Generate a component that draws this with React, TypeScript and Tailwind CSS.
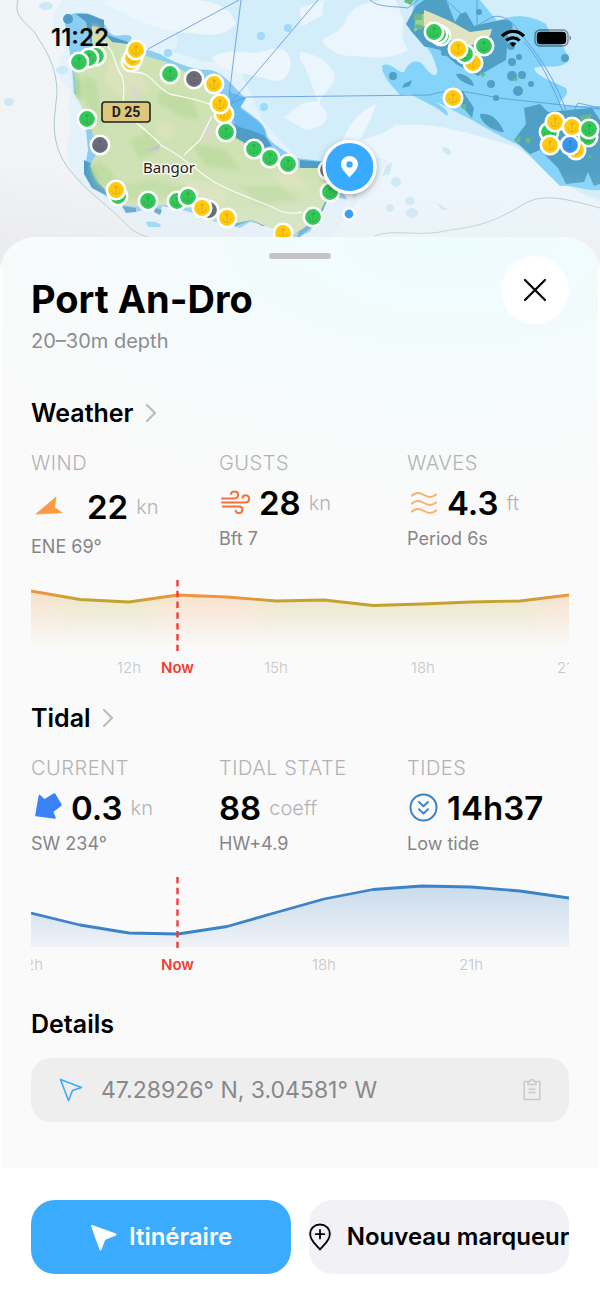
import type { ReactNode } from "react";

const FONT = "font-['Inter','Liberation_Sans',sans-serif]";

/* ── Map data ── */

type MarkerKind = "green" | "yellow" | "grey" | "blue";

const MARKER_FILL: Record<MarkerKind, string> = {
  green: "#34c759",
  yellow: "#ffc90e",
  grey: "#6c6d7c",
  blue: "#3a97f0",
};

const MARKERS: [number, number, MarkerKind][] = [
  [96, 56, "green"],
  [89, 58, "green"],
  [79, 62, "green"],
  [131, 62, "yellow"],
  [133, 58, "yellow"],
  [136, 50, "yellow"],
  [170, 74, "green"],
  [194, 79, "grey"],
  [214, 84, "yellow"],
  [224, 114, "yellow"],
  [220, 104, "yellow"],
  [226, 132, "green"],
  [254, 149, "green"],
  [270, 158, "green"],
  [288, 164, "green"],
  [87, 119, "green"],
  [100, 145, "grey"],
  [118, 196, "green"],
  [116, 190, "yellow"],
  [148, 201, "green"],
  [177, 201, "green"],
  [188, 197, "green"],
  [209, 210, "grey"],
  [202, 208, "yellow"],
  [227, 218, "yellow"],
  [283, 233, "yellow"],
  [313, 217, "green"],
  [330, 192, "green"],
  [328, 170, "grey"],
  [441, 36, "green"],
  [438, 34, "green"],
  [434, 32, "green"],
  [473, 63, "yellow"],
  [465, 54, "green"],
  [458, 49, "yellow"],
  [484, 46, "green"],
  [453, 98, "yellow"],
  [549, 132, "green"],
  [588, 137, "green"],
  [576, 150, "yellow"],
  [550, 145, "yellow"],
  [555, 122, "yellow"],
  [572, 127, "yellow"],
  [589, 129, "green"],
  [570, 145, "blue"],
];

function Marker({ x, y, kind }: { x: number; y: number; kind: MarkerKind }) {
  return (
    <g transform={`translate(${x} ${y})`}>
      <circle r="9.2" fill={MARKER_FILL[kind]} stroke="#fff" strokeWidth="2.6" />
      <g fill="none" stroke="#000" strokeOpacity="0.11" strokeWidth="1" strokeLinecap="round">
        <circle cy="-3.4" r="1.1" />
        <path d="M0 -2.2V4.6M-4 .6C-4 3.4 -2.4 4.6 0 4.6S4 3.4 4 .6" />
      </g>
    </g>
  );
}

function SeaMap() {
  return (
    <svg
      className="block h-full w-full"
      viewBox="0 0 600 273"
      preserveAspectRatio="xMidYMin slice"
      role="img"
      aria-label="Map"
    >
      <defs>
        <linearGradient id="sea" x1="0" y1="1" x2="0.4" y2="0">
          <stop offset="0" stopColor="#e9eaec" />
          <stop offset="0.35" stopColor="#f2f3f4" />
          <stop offset="1" stopColor="#f0f6fa" />
        </linearGradient>
        <linearGradient id="fog" x1="0" y1="0" x2="0" y2="1">
          <stop offset="0.62" stopColor="#ececee" stopOpacity="0" />
          <stop offset="0.9" stopColor="#ececee" stopOpacity="0.95" />
        </linearGradient>
        <filter id="pinShadow" x="-40%" y="-40%" width="180%" height="180%">
          <feDropShadow dx="0" dy="2" stdDeviation="3" floodColor="#000" floodOpacity="0.3" />
        </filter>
        <filter id="soft">
          <feGaussianBlur stdDeviation="2" />
        </filter>
      </defs>

      <rect width="600" height="273" fill="url(#sea)" />

      {/* Pale sea */}
      <path
        fill="#e4f2fb"
        d="M62 0H600V240H150C136 222 118 212 98 200C76 184 64 166 68 140C76 120 62 106 72 92C54 78 56 60 66 50C52 34 46 20 62 0Z"
      />
      <path
        fill="#d3edfa"
        d="M182 0H600V200L520 170L430 128L395 124L382 135L350 150L330 170L300 162L262 120L236 60L205 62L170 50C190 44 160 24 182 0Z"
      />
      <path
        fill="#edf6fd"
        d="M100 2C120 10 150 30 180 32C205 34 220 40 236 24C232 8 214 0 190 0H108ZM212 58C232 44 250 58 268 50C300 40 296 88 270 80C250 72 226 76 212 58Z"
      />
      <path
        fill="#ebf5fd"
        d="M300 8L324 0L322 16C312 20 306 26 300 26ZM346 20C352 4 372 0 396 0L402 16C408 26 396 32 408 50C392 60 372 58 358 56C342 58 326 50 322 40C330 34 342 32 346 20ZM300 52C318 54 330 62 335 76C334 90 320 92 320 104C336 120 322 128 306 130L284 118C294 108 304 100 318 102C310 80 306 66 300 60Z"
      />
      <path
        fill="#edf6fd"
        d="M340 150C346 124 362 110 376 104C372 116 368 126 360 140C370 138 388 132 396 126C430 120 470 134 514 146C542 162 560 184 600 204V240H330C340 218 372 190 388 160Z"
      />

      {/* Shallow water */}
      <path
        fill="#84d3f8"
        d="M414 0H480L498 22C508 14 530 14 546 24C550 38 568 44 568 62C556 70 546 64 534 68C536 76 550 80 566 88C570 98 560 96 560 106H600V190C588 192 572 184 560 186C550 176 536 162 520 146C500 136 486 128 472 120C456 112 446 106 436 102C444 108 450 112 447 116C436 106 424 102 414 96C408 92 404 96 400 95C392 86 382 76 382 66C390 60 398 74 404 72C410 58 420 60 424 66C434 80 440 76 436 66C432 50 424 44 410 30Z"
      />
      <path
        fill="#8ccdf2"
        d="M64 18C76 8 100 12 108 30C114 42 128 30 132 38C124 46 140 46 160 54C180 66 196 70 210 70C226 74 230 84 246 98L240 106C252 116 264 122 266 132C268 142 280 148 296 158L330 162L360 190L350 200L330 196L310 232L290 240L280 228L250 222L240 228L216 222L190 212L162 206L160 214L150 208L136 212L120 204L92 188L84 172L88 150L84 110L74 92L72 66Z"
      />
      <path
        fill="#4f9dc6"
        d="M76 14L88 14L104 20L104 34L116 38L128 42L128 52L90 42L86 22ZM74 92L86 108L84 96ZM84 160L92 164L94 176L104 188L108 196L92 188L84 174ZM122 206L136 208V212L126 213ZM156 208L162 210L160 215L154 212ZM230 122L244 128L262 132L272 146L254 150L234 142ZM228 222L250 216L280 226L262 226L252 220L236 226ZM300 160L324 162L330 170L300 170ZM330 194L318 222L296 240L300 228Z"
      />
      <path fill="#62b9ef" d="M230 92L246 98L240 108C252 118 264 122 266 136L250 130L236 126L230 112Z" />
      <circle cx="68" cy="19" r="5" fill="#4f9dc6" />
      <path fill="#84d3f8" d="M146 222C152 220 164 224 160 227H148Z" />
      <path
        fill="#509fc4"
        d="M416 6L424 0H446L455 22L460 14L466 12L474 26L500 20C514 18 516 28 508 34L506 60L492 68L478 76L456 64L440 50L424 46L412 32L406 24ZM456 74C464 72 474 80 474 86C466 84 458 80 456 74ZM462 90L474 108L472 118L460 104ZM480 114C492 112 500 122 504 132C496 132 480 124 480 114ZM404 84L412 80L410 86L402 88ZM524 108L540 104L548 112L592 108L600 120V184L594 186L588 172L584 182L566 184L558 168L540 150L530 154L514 140L526 124Z"
      />
      {[
        [433, 5, 4],
        [445, 7, 4],
        [479, 12, 3],
        [393, 76, 4],
        [427, 43, 4],
        [444, 53, 3],
        [491, 84, 4],
        [512, 62, 4],
        [519, 57, 3],
        [512, 76, 5],
        [522, 75, 4],
        [531, 84, 3],
        [518, 91, 5],
        [496, 98, 3],
        [565, 58, 4],
        [511, 46, 4],
      ].map(([cx, cy, r]) => (
        <circle key={`${cx}-${cy}`} cx={cx} cy={cy} r={r} fill="#509fc4" />
      ))}
      <g fill="#9fdaf8">
        <circle cx="168" cy="53" r="4" />
        <circle cx="261" cy="36" r="4" />
        <circle cx="288" cy="28" r="4" />
        <circle cx="264" cy="107" r="4" />
      </g>
      <g fill="#cde9f7">
        <ellipse cx="9" cy="102" rx="5" ry="4" />
        <ellipse cx="46" cy="6" rx="7" ry="4" />
        <ellipse cx="62" cy="70" rx="6" ry="4" />
        <ellipse cx="396" cy="182" rx="5" ry="5" />
        <ellipse cx="410" cy="201" rx="5" ry="4" />
        <ellipse cx="390" cy="208" rx="4" ry="4" />
        <ellipse cx="412" cy="213" rx="6" ry="5" />
        <path d="M386 166L392 162L390 174L382 176ZM442 148C450 146 452 152 450 156L444 152ZM436 202L448 210L442 210Z" />
      </g>

      {/* Land */}
      <path
        fill="#cfe2b4"
        d="M92 26L100 28L112 42L128 44L146 56L166 62L186 72L206 84L220 96L230 114L236 138L250 146L270 154L300 168L326 168L334 190L326 200L318 216L304 228L290 236L270 228L252 220L232 224L208 214L190 206L166 205L140 207L122 205L108 192L98 182L90 166L98 150L93 135L85 112L76 96L74 66L82 54L92 46Z"
      />
      <g filter="url(#soft)">
        <path fill="#8ccb8e" d="M75 70L79 80L80 100L76 94ZM92 164L98 176L110 190L96 182L90 168Z" />
        <path
          fill="#c0dca3"
          d="M84 76L96 80L100 110L104 132L90 112L82 92ZM98 160L112 172L120 200L100 184L92 168ZM160 90L190 96L200 120L180 116L156 102ZM190 142L226 150L240 170L206 166ZM130 140L150 130L160 150L140 160ZM240 186L280 186L300 200L260 206ZM118 186L150 180L190 188L170 198L130 202Z"
        />
        <path
          fill="#dbe3bb"
          d="M110 60L140 70L150 90L120 96L104 80ZM180 176L230 190L220 204L190 194ZM160 120L176 128L170 140L156 134ZM270 170L300 174L310 190L282 186Z"
        />
        <path fill="#dccf9f" d="M92 24L100 28L104 40L96 36Z" />
        <path fill="#d9dac9" d="M206 118L214 126L210 142L200 136ZM130 84L142 88L138 100L130 98Z" />
      </g>
      <path fill="#c6c4cf" d="M146 151L162 143L158 150Z" />
      <path fill="#9fcf94" d="M416 14L424 14L430 26L420 28L414 32Z" />
      <path fill="#dfe3c0" d="M424 10L434 14L452 22L470 32L492 29L490 36L470 46L450 40L424 26Z" />
      <g fill="#68b98b">
        <path d="M405 0H414L411 5L404 2ZM414 14H422V20H414ZM416 24L424 26L422 30L414 28ZM460 104L466 104L466 109L462 109ZM480 72L486 74L482 78ZM512 78L518 78L516 82ZM516 138L521 136L520 142L515 142ZM526 138L531 138L529 144L525 142ZM580 116L592 114L590 120L582 122ZM588 154L592 157L590 159Z" />
      </g>

      {/* Roads */}
      <g fill="none" stroke="#fff" strokeOpacity="0.85" strokeWidth="1.3">
        <path d="M104 42C116 52 114 66 122 76C126 86 122 98 124 112C136 124 150 132 162 146C180 154 190 166 214 182C236 194 252 198 274 208C284 214 292 214 302 212" />
        <path d="M132 72C154 72 150 84 170 94C186 98 196 98 214 106M184 155L200 140L212 116" />
      </g>

      {/* Ferry routes and depth contours */}
      <g fill="none" stroke="#5b93dc" strokeWidth="0.8">
        <path d="M148 49L239 0M241 0L228 104M228 106L318 0M230 104L246 97L300 96.500L430 95C450 88 470 92 498 98L600 109M370 0C378 8 396 6 408 8L418 0M446 0L472 24M477 0V26L492 17C510 12 520 34 532 48C546 66 556 84 566 110M524 42C540 60 550 80 563 112M574 110L578 103L600 108" />
      </g>
      <g fill="none" stroke="#8fb9b9" strokeWidth="0.7">
        <path d="M18 0C12 20 32 24 38 38C50 56 56 70 57 90C56 112 50 130 60 154C72 182 110 206 128 226C136 234 144 236 152 238" />
        <path d="M374 236C394 228 420 238 450 230C486 226 504 216 524 204C544 192 570 200 600 208" />
      </g>

      <rect width="600" height="273" fill="url(#fog)" opacity="0.4" />

      {/* Labels */}
      <rect x="102" y="102" width="48" height="20" rx="3" fill="#dec67c" stroke="#222" strokeWidth="1.6" />
      <text x="126" y="117" textAnchor="middle" fontSize="14" fontWeight="700" fontFamily="Roboto, sans-serif" fill="#222">
        D 25
      </text>
      <text
        x="169"
        y="173"
        textAnchor="middle"
        fontSize="15"
        fontFamily="'Noto Sans', sans-serif"
        fill="#222"
        stroke="#fff"
        strokeWidth="3"
        strokeOpacity="0.8"
        paintOrder="stroke"
      >
        Bangor
      </text>

      {MARKERS.map(([x, y, kind]) => (
        <Marker key={`${x}-${y}`} x={x} y={y} kind={kind} />
      ))}

      {/* Selected pin */}
      <path d="M341 188L349 203L358 188Z" fill="#f2f4f6" />
      <circle cx="349.500" cy="167" r="25.500" fill="#38aaff" stroke="#fff" strokeWidth="3.200" filter="url(#pinShadow)" />
      <path
        fillRule="evenodd"
        fill="#fff"
        d="M349.500 156C344.600 156 341 159.700 341 164.300C341 169.500 346.500 173.500 349.500 177.600C352.500 173.500 358 169.500 358 164.300C358 159.700 354.400 156 349.500 156ZM349.500 161.200A3.200 3.200 0 1 1 349.500 167.600A3.200 3.200 0 1 1 349.500 161.200Z"
      />
      <circle cx="349" cy="214" r="5.600" fill="#38a0f5" stroke="#fff" strokeWidth="2.400" />
    </svg>
  );
}

function StatusBar() {
  return (
    <div className="absolute inset-x-0 top-0 flex items-center justify-between pt-[22px] pr-7 pl-[51px] text-black">
      <span className="text-2xl leading-8 font-semibold">11:22</span>
      <div className="flex items-center gap-2">
        <svg width="26" height="19" viewBox="0 0 26 19" aria-label="Wi-Fi">
          <g fill="none" stroke="#000" strokeWidth="3.2">
            <path d="M2 7.200C8.200 .8 17.800 .8 24 7.200" />
            <path d="M6.400 11.600C10.200 8 15.800 8 19.600 11.600" />
          </g>
          <path d="M13 18L9.600 14.500C11.400 12.800 14.600 12.800 16.400 14.500Z" />
        </svg>
        <svg width="38" height="18" viewBox="0 0 38 18" aria-label="Battery">
          <rect x="1" y="1" width="33" height="16" rx="5" fill="none" stroke="#000" strokeOpacity="0.45" strokeWidth="1.3" />
          <rect x="2.800" y="2.800" width="29.400" height="12.400" rx="3.600" />
          <path d="M35.600 6.500C37.400 7 37.400 11 35.600 11.500Z" fillOpacity="0.5" />
        </svg>
      </div>
    </div>
  );
}

/* ── Sheet pieces ── */

function SectionLink({ children }: { children: ReactNode }) {
  return (
    <h2 className="text-[25px] leading-9 font-semibold">
      <button type="button" className="flex items-center gap-3">
        {children}
        <svg width="10" height="18" viewBox="0 0 10 18" fill="none" stroke="#bcbcbe" strokeWidth="2.2" strokeLinecap="round" strokeLinejoin="round">
          <path d="M1 1L9 9L1 17" />
        </svg>
      </button>
    </h2>
  );
}

interface StatProps {
  label: string;
  value: string;
  unit?: string;
  note: string;
  icon?: ReactNode;
  wide?: boolean;
}

function Stat({ label, value, unit, note, icon, wide }: StatProps) {
  return (
    <div className="whitespace-nowrap">
      <div className="text-xl leading-8 font-light tracking-wide text-[#b2b2b4]">{label}</div>
      <div className={`mt-1 flex items-center ${wide ? "h-12" : "h-10"}`}>
        {icon && <span className={`flex w-9 shrink-0 ${wide ? "mr-5" : "mr-1"}`}>{icon}</span>}
        <span className="text-[33px] leading-10 font-semibold">{value}</span>
        {unit && <span className="ml-2 text-xl leading-10 font-light text-[#b2b2b4]">{unit}</span>}
      </div>
      <div className="mt-0.5 text-lg leading-7 text-[#858587]">{note}</div>
    </div>
  );
}

interface Tick {
  x: number;
  label: string;
}

interface ChartProps {
  id: string;
  points: [number, number][];
  ticks: Tick[];
  stops: [number, string][];
  base: number;
  endOpacity: number;
}

function Chart({ id, points, ticks, stops, base, endOpacity }: ChartProps) {
  const line = points.map(([x, y]) => `${x} ${y}`).join("L");
  return (
    <svg className="mt-[19px] block h-auto w-full overflow-hidden" viewBox="0 0 538 100" role="img" aria-label={`${id} forecast`}>
      <defs>
        <linearGradient id={`${id}-hue`} gradientUnits="userSpaceOnUse" x1="0" y1="0" x2="538" y2="0">
          {stops.map(([offset, color]) => (
            <stop key={offset} offset={offset} stopColor={color} />
          ))}
        </linearGradient>
        <linearGradient id={`${id}-fade`} gradientUnits="userSpaceOnUse" x1="0" y1="8" x2="0" y2={base}>
          <stop offset="0" stopColor="#fff" stopOpacity="0.26" />
          <stop offset="1" stopColor="#fff" stopOpacity={endOpacity} />
        </linearGradient>
        <mask id={`${id}-mask`} maskUnits="userSpaceOnUse" x="0" y="0" width="538" height="100">
          <rect width="538" height={base} fill={`url(#${id}-fade)`} />
        </mask>
      </defs>
      <path d={`M${line}V${base}H0Z`} fill={`url(#${id}-hue)`} mask={`url(#${id}-mask)`} />
      <path d={`M${line}`} fill="none" stroke={`url(#${id}-hue)`} strokeWidth="2.8" strokeLinejoin="round" />
      <path d="M146.500 0V71" stroke="#f23c35" strokeWidth="2.4" strokeDasharray="6.4 4.4" />
      {ticks.map(({ x, label }) => (
        <text key={label} x={x} y="93" textAnchor="middle" fontSize="15" fontWeight="300" fill="#c6c6c8">
          {label}
        </text>
      ))}
      <text x="146.500" y="93" textAnchor="middle" fontSize="15" fontWeight="600" fill="#f23c35">
        Now
      </text>
    </svg>
  );
}

const OLIVE = "#c3a22e";
const ORANGE = "#f0953f";

export default function App() {
  return (
    <div className={`flex min-h-screen w-full flex-col bg-white text-black ${FONT}`}>
      <div className="relative h-[273px] shrink-0 overflow-hidden">
        <SeaMap />
        <StatusBar />
      </div>

      <main className="relative -mt-9 flex flex-1 flex-col overflow-hidden rounded-t-[36px] bg-white">
        <div className="border-x-2 border-white bg-[#fafafa] bg-[radial-gradient(ellipse_90%_28%_at_75%_0%,#edfdfe_0%,#f4fbfc_50%,#fafafa_100%)] px-[29px] pb-[46px]">
          <div className="absolute top-4 left-1/2 h-1.5 w-[62px] -translate-x-1/2 rounded-full bg-[#c4c4c7]" />

          <header className="flex items-start justify-between pt-[19px]">
            <div className="pt-[19px]">
              <h1 className="text-[38px] leading-[48px] font-bold">Port An-Dro</h1>
              <p className="mt-1 text-xl leading-7 text-[#8c8d8f]">20–30m depth</p>
            </div>
            <button
              type="button"
              aria-label="Close"
              className="flex size-[68px] items-center justify-center rounded-full bg-white"
            >
              <svg width="24" height="24" viewBox="0 0 24 24" fill="none" stroke="#000" strokeWidth="2.2" strokeLinecap="round">
                <path d="M2 2L22 22M22 2L2 22" />
              </svg>
            </button>
          </header>

          {/* Weather */}
          <section className="mt-10">
            <SectionLink>Weather</SectionLink>
            <div className="mt-4 grid grid-cols-3 gap-[26px]">
              <Stat
                wide
                label="WIND"
                value="22"
                unit="kn"
                note="ENE 69°"
                icon={
                  <svg width="36" height="48" viewBox="0 0 36 48">
                    <path d="M25 14L5 31L31 29.700L23.500 24.500Z" fill="#fa9a43" stroke="#fa9a43" strokeWidth="0.8" strokeLinejoin="round" />
                  </svg>
                }
              />
              <Stat
                label="GUSTS"
                value="28"
                unit="kn"
                note="Bft 7"
                icon={
                  <svg width="36" height="40" viewBox="0 0 36 40" fill="none" stroke="#f47239" strokeWidth="2" strokeLinecap="round">
                    <path d="M3 15.500H15.500C20.500 15.500 20.300 8.500 15.500 8.500C13.500 8.500 12.300 9.500 12 11" />
                    <path d="M3 19.500H26C31.500 19.500 31.300 12.300 26.700 12.300C24.700 12.300 23.700 13.500 23.400 14.800" />
                    <path d="M4 23.500H20C24.800 23.500 24.300 30.100 20 30.100C18.200 30.100 17 29.100 16.700 27.800" />
                  </svg>
                }
              />
              <Stat
                label="WAVES"
                value="4.3"
                unit="ft"
                note="Period 6s"
                icon={
                  <svg width="36" height="40" viewBox="0 0 36 40" fill="none" stroke="#f9b06b" strokeWidth="2" strokeLinecap="round">
                    <path d="M5 12.500C9 8.500 13 9.500 17 12S25 15 29 11.500" />
                    <path d="M5 20.500C9 16.500 13 17.500 17 20S25 23 29 19.500" />
                    <path d="M5 28.500C9 24.500 13 25.500 17 28S25 31 29 27.500" />
                  </svg>
                }
              />
            </div>
            <Chart
              id="wind"
              base={70}
              endOpacity={0}
              points={[
                [0, 11],
                [49, 19.5],
                [98, 22],
                [147, 15],
                [196, 17],
                [245, 21],
                [293, 20],
                [342, 25.5],
                [391, 24],
                [440, 22],
                [489, 21],
                [538, 15],
              ]}
              stops={[
                [0, ORANGE],
                [0.09, OLIVE],
                [0.19, OLIVE],
                [0.27, ORANGE],
                [0.37, ORANGE],
                [0.46, OLIVE],
                [0.91, OLIVE],
                [1, ORANGE],
              ]}
              ticks={[
                { x: 98, label: "12h" },
                { x: 245, label: "15h" },
                { x: 392, label: "18h" },
                { x: 538, label: "21h" },
              ]}
            />
          </section>

          {/* Tidal */}
          <section className="mt-5">
            <SectionLink>Tidal</SectionLink>
            <div className="mt-4 grid grid-cols-3 gap-[26px]">
              <Stat
                label="CURRENT"
                value="0.3"
                unit="kn"
                note="SW 234°"
                icon={
                  <svg width="36" height="40" viewBox="0 0 36 40">
                    <path
                      d="M8.500 7.500L13.500 12L23.500 6L30 17L21.500 23.500L24 30L5 27.500Z"
                      fill="#3b82f6"
                      stroke="#3b82f6"
                      strokeWidth="1.6"
                      strokeLinejoin="round"
                    />
                  </svg>
                }
              />
              <Stat label="TIDAL STATE" value="88" unit="coeff" note="HW+4.9" />
              <Stat
                label="TIDES"
                value="14h37"
                note="Low tide"
                icon={
                  <svg width="36" height="40" viewBox="0 0 36 40" fill="none" stroke="#3b84c8" strokeWidth="2" strokeLinecap="round" strokeLinejoin="round">
                    <circle cx="16.500" cy="19.500" r="13" />
                    <path d="M12 14L16.500 18.300L21 14M12 21.300L16.500 25.600L21 21.300" />
                  </svg>
                }
              />
            </div>
            <Chart
              id="tide"
              base={70}
              endOpacity={0.06}
              points={[
                [0, 36],
                [49, 48],
                [98, 56],
                [147, 57],
                [196, 49.5],
                [245, 35.5],
                [293, 22],
                [342, 12.5],
                [391, 9],
                [440, 10],
                [489, 14],
                [538, 21],
              ]}
              stops={[
                [0, "#3b82c8"],
                [1, "#3b82c8"],
              ]}
              ticks={[
                { x: 0, label: "12h" },
                { x: 293, label: "18h" },
                { x: 440, label: "21h" },
              ]}
            />
          </section>

          {/* Details */}
          <section className="mt-[29px]">
            <h2 className="text-[25px] leading-9 font-semibold">Details</h2>
            <button
              type="button"
              aria-label="Copy coordinates"
              className="mt-4 flex h-16 w-full items-center rounded-[20px] bg-[#eeeeee] pr-6 pl-7 text-[#88888a]"
            >
              <svg width="24" height="24" viewBox="0 0 24 24" fill="none" stroke="#3fa9f5" strokeWidth="1.6" strokeLinejoin="round">
                <path d="M1.500 1.500L22.500 9.500L13.500 12.500L9.500 22.500Z" />
              </svg>
              <span className="ml-[18px] text-[23px] leading-8">47.28926° N, 3.04581° W</span>
              <svg className="ml-auto" width="26" height="24" viewBox="0 0 26 24" fill="none" stroke="#c9c9cb" strokeWidth="1.5" strokeLinejoin="round">
                <path d="M9.500 3.500H5.200V21.500H20.800V3.500H16.500M9 6.500V3.500H11C11 1 15 1 15 3.500H17V6.500ZM9.500 11.200H16.500M9.500 14.500H16.500" />
              </svg>
            </button>
          </section>
        </div>

        {/* Bottom actions */}
        <footer className="mt-auto grid grid-cols-2 gap-[18px] px-[31px] pt-8 pb-[25px]">
          <button
            type="button"
            className="flex h-[74px] items-center justify-center gap-3 rounded-3xl bg-[#3aabff] text-2xl font-semibold text-white"
          >
            <svg width="27" height="27" viewBox="0 0 27 27" fill="#fff" stroke="#fff" strokeWidth="2" strokeLinejoin="round">
              <path d="M2 2L25.500 10.500L14.500 15L10.500 25.500Z" />
            </svg>
            Itinéraire
          </button>
          <button
            type="button"
            className="flex h-[74px] items-center justify-center gap-4 rounded-3xl bg-[#f2f1f6] text-2xl font-semibold whitespace-nowrap"
          >
            <svg className="shrink-0" width="22" height="28" viewBox="0 0 22 28" fill="none" stroke="#000" strokeWidth="1.8" strokeLinecap="round" strokeLinejoin="round">
              <path d="M11 26.500C8 22.500 1.200 18 1.200 11.200C1.200 5.500 5.500 1.500 11 1.500S20.800 5.500 20.800 11.200C20.800 18 14 22.500 11 26.500ZM11 7V15.500M6.700 11.200H15.300" />
            </svg>
            Nouveau marqueur
          </button>
        </footer>
      </main>
    </div>
  );
}
